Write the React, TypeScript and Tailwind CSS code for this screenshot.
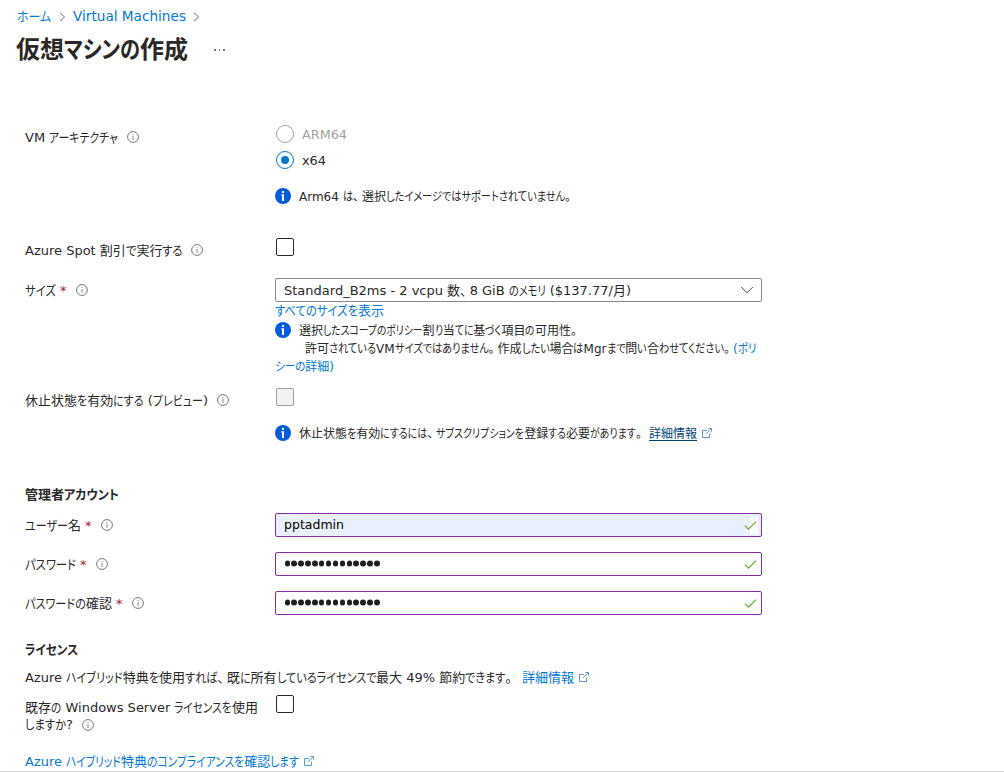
import { useLayoutEffect, useRef, type ReactNode } from "react";

const RUNS = /[、。]|[\u3003-\u30ff]+|[\u4e00-\u9fff]+|[^\u3001-\u30ff\u4e00-\u9fff]+/g;
const isKana = (s: string) => /^[\u3003-\u30ff]/.test(s);
const isStop = (s: string) => s === "、" || s === "。";

/** One line of UI text whose kana are condensed so that the line fills its box. */
function Line({ children, className = "", high = false }: { children: string; className?: string; high?: boolean }) {
  const ref = useRef<HTMLSpanElement>(null);
  const runs = children.match(RUNS) ?? [];
  const hasKana = runs.some(isKana);

  useLayoutEffect(() => {
    const box = ref.current;
    if (!box) return;
    const spans = Array.from(box.children) as HTMLElement[];
    spans.forEach((s) => {
      s.style.width = "";
      s.style.transform = "";
    });
    const widths = spans.map((s) => s.getBoundingClientRect().width);
    const flexible = spans.map((s) => !hasKana || isKana(s.textContent ?? ""));
    const fixed = widths.reduce((sum, w, i) => (flexible[i] ? sum : sum + w), 0);
    const free = widths.reduce((sum, w, i) => (flexible[i] ? sum + w : sum), 0);
    const k = (box.clientWidth - fixed) / free;
    spans.forEach((s, i) => {
      if (!flexible[i]) return;
      s.style.width = `${widths[i] * k}px`;
      s.style.transform = `scaleX(${k})`;
    });
  }, [children, hasKana]);

  return (
    <span ref={ref} className={`flex shrink-0 whitespace-pre ${high ? "" : "translate-y-px"} ${className}`}>
      {runs.map((r, i) => (
        <span key={i} className={`block shrink-0 origin-left ${isStop(r) ? "pr-[3px]" : ""}`}>
          {r}
        </span>
      ))}
    </span>
  );
}

function Hint({ className = "" }: { className?: string }) {
  return (
    <svg viewBox="0 0 12 12" className={`h-3 w-3 shrink-0 ${className}`} fill="none">
      <circle cx="6" cy="6" r="5.4" stroke="#6b6967" strokeWidth="0.9" />
      <path d="M6 5V9" stroke="#8a8886" />
      <path d="M6 3V4" stroke="#8a8886" />
    </svg>
  );
}

function InfoBadge() {
  return (
    <svg viewBox="0 0 16 16" className="mr-2 h-4 w-4 shrink-0">
      <circle cx="8" cy="8" r="8" fill="#015cda" />
      <path d="M7 3h2v2H7zM6.3 6.3H9V13H7V7.6h-.7z" fill="#fff" />
    </svg>
  );
}

function External({ className = "" }: { className?: string }) {
  return (
    <svg viewBox="0 0 10 10" className={`h-[10px] w-[10px] shrink-0 ${className}`} fill="none" stroke="#4a8fdd" strokeWidth="0.9">
      <path d="M5 2.5H.5v7h7V5.5M4 6 9.3 .8M6.3.5h3.2v3.2" />
    </svg>
  );
}

function Star() {
  return <span className="ml-1 w-[7px] shrink-0 translate-y-px text-[#a4262c]">*</span>;
}

function Row({ label, children, className = "" }: { label: ReactNode; children?: ReactNode; className?: string }) {
  return (
    <div className={`flex ${className}`}>
      <div className="flex h-6 w-[250px] shrink-0 items-center">{label}</div>
      {children}
    </div>
  );
}

function Check() {
  return (
    <svg viewBox="0 0 13 9" className="h-[9px] w-[13px]" fill="none" stroke="#6bb02f" strokeWidth="1.2">
      <path d="M.8 4.6 4.4 8.1 12.2 .6" />
    </svg>
  );
}

function Field({ children, filled = false }: { children: ReactNode; filled?: boolean }) {
  return (
    <div
      className={`flex h-6 w-[487px] items-center justify-between rounded-[2px] border border-[#8a2da5] pl-2 ${
        filled ? "bg-[#e8f0fe]" : "bg-white"
      }`}
    >
      {children}
      <div className={`mr-[3px] flex h-[18px] w-4 items-center justify-end ${filled ? "bg-linear-to-r from-transparent from-50% to-white to-50%" : ""}`}>
        <div className="mr-[1px] shrink-0">
          <Check />
        </div>
      </div>
    </div>
  );
}

function Dots() {
  return (
    <div className="ml-[0.5px] flex gap-[1.4px]">
      {Array.from({ length: 14 }, (_, i) => (
        <i key={i} className="block h-[5.5px] w-[5.5px] -translate-y-[0.5px] rounded-full bg-[#201f1e]" />
      ))}
    </div>
  );
}

function Crumb() {
  return (
    <svg viewBox="0 0 7 10" className="h-[10px] w-[7px] translate-y-px" fill="none" stroke="#605e5c" strokeWidth="0.9">
      <path d="M1 .8 5.6 5 1 9.2" />
    </svg>
  );
}

export default function App() {
  return (
    <div className="h-[773px] w-[1004px] overflow-hidden bg-white font-['DejaVu_Sans','Noto_Sans_CJK_JP',sans-serif] text-[13px] leading-[18px] text-[#292827] [font-feature-settings:'palt']">
      <nav className="flex h-8 items-center pl-[17px] text-[#0078d4]">
        <Line className="w-[34px]">ホーム</Line>
        <span className="mr-[7px] ml-[8px]">
          <Crumb />
        </span>
        <Line className="w-[113px] text-[14px]" high>
          Virtual Machines
        </Line>
        <span className="ml-[7px]">
          <Crumb />
        </span>
      </nav>
      <header className="flex h-9 items-center pl-4">
        <h1 className="text-[24px] leading-9 font-bold">
          <Line className="w-[172px]" high>
            仮想マシンの作成
          </Line>
        </h1>
        <div className="ml-[26px] flex gap-[3px]">
          <i className="h-[1.5px] w-[1.5px] bg-[#7a7876]" />
          <i className="h-[1.5px] w-[1.5px] bg-[#7a7876]" />
          <i className="h-[1.5px] w-[1.5px] bg-[#7a7876]" />
        </div>
      </header>

      <main className="pt-[54px] pl-[25px]">
        <Row
          className="h-[113px]"
          label={
            <div className="flex items-center pt-[6px]">
              <Line className="w-[93px]">VM アーキテクチャ</Line>
              <Hint className="ml-[9px]" />
            </div>
          }
        >
          <div>
            <div className="flex h-6 items-center text-[#a19f9d]">
              <span className="mr-2 ml-px h-[18px] w-[18px] rounded-full border border-[#a19f9d]" />
              <Line className="w-[45px]">ARM64</Line>
            </div>
            <div className="mt-[2px] flex h-6 items-center">
              <span className="mr-2 ml-px flex h-[18px] w-[18px] items-center justify-center rounded-full border border-[#0078d4]">
                <span className="h-2 w-2 rounded-full bg-[#0078d4]" />
              </span>
              <Line className="w-[24px]">x64</Line>
            </div>
            <div className="mt-3 flex h-6 items-center text-[12px]">
              <InfoBadge />
              <Line className="w-[275px]">Arm64 は、選択したイメージではサポートされていません。</Line>
            </div>
          </div>
        </Row>

        <Row
          className="h-[43px]"
          label={
            <div className="flex items-center pt-[6px]">
              <Line className="w-[158px]">Azure Spot 割引で実行する</Line>
              <Hint className="ml-2" />
            </div>
          }
        >
          <span className="mt-[3px] ml-px h-[18px] w-[18px] rounded-[2px] border border-[#292827]" />
        </Row>

        <Row
          className="h-[110px]"
          label={
            <>
              <Line className="w-[31px]">サイズ</Line>
              <Star />
              <Hint className="ml-[9px]" />
            </>
          }
        >
          <div className="w-[487px]">
            <div className="flex h-6 items-center justify-between rounded-[2px] border border-[#8a8886] pr-[7px] pl-2">
              <Line className="w-[347px]">Standard_B2ms - 2 vcpu 数、8 GiB のメモリ ($137.77/月)</Line>
              <svg viewBox="0 0 14 8" className="h-2 w-[14px]" fill="none" stroke="#484644">
                <path d="M1 .8 7 6.8 13 .8" />
              </svg>
            </div>
            <div className="flex h-[18px] text-[#0078d4]">
              <Line className="w-[109px]" high>
                すべてのサイズを表示
              </Line>
            </div>
            <div className="flex h-[20px] items-center text-[12px]">
              <InfoBadge />
              <Line className="w-[281px]">選択したスコープのポリシー割り当てに基づく項目の可用性。</Line>
            </div>
            <div className="flex h-[17px] items-center pl-[30px] text-[12px]">
              <Line className="w-[428px]" high>
                許可されているVMサイズではありません。作成したい場合はMgrまで問い合わせてください。
              </Line>
              <Line className="w-[23px] text-[#0078d4]" high>
                (ポリ
              </Line>
            </div>
            <div className="flex h-[18px] items-center text-[12px] text-[#0078d4]">
              <Line className="w-[59px]">シーの詳細)</Line>
            </div>
          </div>
        </Row>

        <Row
          className="h-[95px]"
          label={
            <div className="flex items-center">
              <Line className="w-[183px]">休止状態を有効にする (プレビュー)</Line>
              <Hint className="ml-[9px]" />
            </div>
          }
        >
          <div>
            <div className="ml-px h-[18px] w-[18px] rounded-[2px] border border-[#a19f9d] bg-[#f3f2f1]" />
            <div className="mt-[15px] flex h-6 items-center text-[12px]">
              <InfoBadge />
              <Line className="w-[346px]">休止状態を有効にするには、サブスクリプションを登録する必要があります。</Line>
              <a className="ml-1 flex h-[15px] items-center border-b border-[#004578] text-[#004578]">
                <Line className="w-[48px]">詳細情報</Line>
              </a>
              <External className="ml-[5px]" />
            </div>
          </div>
        </Row>

        <h2 className="flex h-[30px] font-bold leading-6">
          <Line className="w-[94px]" high>
            管理者アカウント
          </Line>
        </h2>
        <Row
          className="h-[39px]"
          label={
            <>
              <Line className="w-[56px]">ユーザー名</Line>
              <Star />
              <Hint className="ml-[9px]" />
            </>
          }
        >
          <Field filled>
            <Line className="w-[60px] text-black" high>
              pptadmin
            </Line>
          </Field>
        </Row>
        <Row
          className="h-[39px]"
          label={
            <>
              <Line className="w-[51px]">パスワード</Line>
              <Star />
              <Hint className="ml-[9px]" />
            </>
          }
        >
          <Field>
            <Dots />
          </Field>
        </Row>
        <Row
          className="h-[47px]"
          label={
            <>
              <Line className="w-[87px]">パスワードの確認</Line>
              <Star />
              <Hint className="ml-[9px]" />
            </>
          }
        >
          <Field>
            <Dots />
          </Field>
        </Row>

        <h2 className="flex h-[28px] font-bold leading-6">
          <Line className="w-[53px]" high>
            ライセンス
          </Line>
        </h2>
        <div className="flex h-[22px] items-center">
          <Line className="w-[490px]">Azure ハイブリッド特典を使用すれば、既に所有しているライセンスで最大 49% 節約できます。</Line>
          <Line className="ml-[7px] w-[52px] text-[#0078d4]">詳細情報</Line>
          <External className="ml-[5px]" />
        </div>
        <div className="mt-[7px] flex h-[55px]">
          <div className="w-[251px] pt-[3px]">
            <Line className="w-[233px]">既存の Windows Server ライセンスを使用</Line>
            <div className="flex h-[17px] items-center">
              <Line className="w-[48px]" high>
                しますか?
              </Line>
              <Hint className="ml-[9px]" />
            </div>
          </div>
          <span className="h-[18px] w-[18px] rounded-[2px] border border-[#292827]" />
        </div>
        <div className="flex h-[21px] items-center text-[#0078d4]">
          <Line className="w-[274px]">Azure ハイブリッド特典のコンプライアンスを確認します</Line>
          <External className="ml-[5px]" />
        </div>
      </main>
      <div className="h-px bg-[#d9d9d9]" />
    </div>
  );
}
